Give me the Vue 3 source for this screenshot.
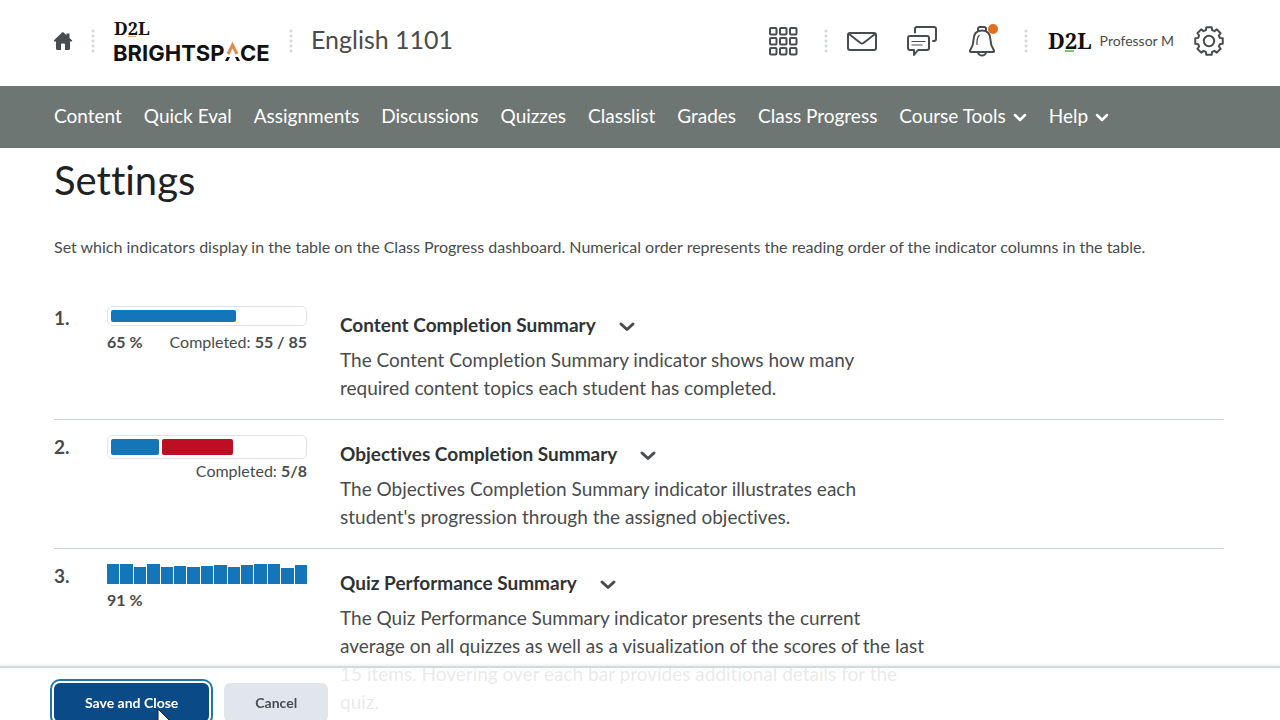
<template>
    <div class="page">
        <header class="header">
            <a class="home" href="#" aria-label="My Home">
                <svg width="20" height="20" viewBox="0 0 20 20">
                    <path d="M10 1 L13.5 4.200 V2.500 H16.500 V7 L19 9.300 Q19.600 10.500 18.500 10.500 H17 V17.500 Q17 19 15.500 19 H12 V13.500 Q12 12.500 11 12.500 H9 Q8 12.500 8 13.500 V19 H4.500 Q3 19 3 17.500 V10.500 H1.500 Q.4 10.500 1 9.300 L9 1.500 Q10 .6 11 1.500 Z" fill="#494c4e" />
                </svg>
            </a>
            <span class="dots"></span>
            <a class="logo" href="#" aria-label="D2L Brightspace">
                <svg width="158" height="50" viewBox="0 0 158 50">
                    <text class="logo-serif" x="1" y="19" font-size="18">D2L</text>
                    <rect x="15" y="20" width="8" height="1" fill="#e8a27c" />
                    <text class="logo-sans" x="0" y="45" font-size="22">BRIGHTSP</text>
                    <path d="M115 38 L119.500 29 L124 38" fill="none" stroke="#e58a4e" stroke-width="3" />
                    <path d="M112 45 L114 41 H117 L115 45 Z M124 45 L122 41 H125 L127 45 Z" fill="#111" />
                    <text class="logo-sans" x="127" y="45" font-size="22">CE</text>
                </svg>
            </a>
            <span class="dots"></span>
            <a class="course" href="#">English 1101</a>
            <div class="tools">
                <button class="icon-button" aria-label="Select a course">
                    <svg width="30" height="30" viewBox="0 0 30 30" fill="none" stroke="#494c4e" stroke-width="2">
                        <rect v-for="n in 9" :key="n" :x="2 + ((n - 1) % 3) * 10" :y="2 + Math.floor((n - 1) / 3) * 10" width="6.500" height="6.500" rx="1" />
                    </svg>
                </button>
                <span class="dots"></span>
                <button class="icon-button" aria-label="Message alerts">
                    <svg width="32" height="32" viewBox="0 0 32 32" fill="none" stroke="#494c4e" stroke-width="2" stroke-linejoin="round">
                        <rect x="2" y="8" width="28" height="17" rx="2" />
                        <path d="M3 9 L14.500 18 Q16 19 17.500 18 L29 9" />
                    </svg>
                </button>
                <button class="icon-button" aria-label="Subscription alerts">
                    <svg width="32" height="32" viewBox="0 0 32 32" fill="none" stroke="#494c4e" stroke-width="2" stroke-linecap="round" stroke-linejoin="round">
                        <path d="M9 7.500 V4 Q9 2 11 2 H28 Q30 2 30 4 V14 Q30 16 28 16 H27" />
                        <path d="M4 11 H21 Q23 11 23 13 V23 Q23 25 21 25 H12 L8 30 V25 H4 Q2 25 2 23 V13 Q2 11 4 11 Z" />
                        <path d="M6 16.500 H19 M6 20 H16" stroke-width="1.200" />
                    </svg>
                </button>
                <button class="icon-button" aria-label="Update alerts">
                    <svg width="32" height="32" viewBox="0 0 32 32" fill="none" stroke="#494c4e" stroke-width="2" stroke-linejoin="round">
                        <path d="M12 6 V4 Q12 2 14 2 H18 Q20 2 20 4 V6" />
                        <path d="M16 5.500 C9.500 5.500 7.500 10 7.500 15 C7.500 20.500 6 22.500 4 25.500 Q3.600 27 5 27 H27 Q28.400 27 28 25.500 C26 22.500 24.500 20.500 24.500 15 C24.500 10 22.500 5.500 16 5.500 Z" />
                        <path d="M12 28 Q13 30.500 16 30.500 Q19 30.500 20 28" />
                        <path d="M13.500 10 Q10.500 13 11 20" stroke-width="1.200" />
                    </svg>
                    <span class="alert-dot"></span>
                </button>
                <span class="dots"></span>
                <button class="profile">
                    <svg width="43" height="30" viewBox="0 0 43 30" aria-hidden="true">
                        <text class="logo-serif" x="0" y="23" font-size="22">D2L</text>
                        <rect x="17" y="24" width="9" height="2" fill="#65d468" />
                    </svg>
                    <span class="user">Professor M</span>
                </button>
                <button class="icon-button" aria-label="Admin tools">
                    <svg width="32" height="32" viewBox="0 0 32 32" fill="none" stroke="#494c4e" stroke-width="2" stroke-linejoin="round">
                        <path :d="gearPath" />
                        <circle cx="16" cy="16" r="5.200" />
                    </svg>
                </button>
            </div>
        </header>

        <nav class="navbar">
            <template v-for="item in navItems" :key="item.name">
                <button v-if="item.menu" class="nav-item">
                    {{ item.name }}
                    <svg width="14" height="10" viewBox="0 0 14 10"><path d="M2 4 L7 9 L12 4" /></svg>
                </button>
                <a v-else class="nav-item" href="#">{{ item.name }}</a>
            </template>
        </nav>

        <main class="content">
            <h1>Settings</h1>
            <p class="intro">Set which indicators display in the table on the Class Progress dashboard. Numerical order represents the reading order of the indicator columns in the table.</p>
            <ol class="indicators">
                <li v-for="(item, index) in indicators" :key="item.title" class="indicator">
                    <span class="order">{{ index + 1 }}.</span>
                    <div class="preview">
                        <div class="chart">
                            <div v-if="item.scores" class="scores">
                                <span v-for="(score, i) in item.scores" :key="i" :style="{ height: score + '%' }"></span>
                            </div>
                            <div v-else class="meter" :class="{ large: item.large }">
                                <span v-for="part in item.parts" :key="part.color" :class="part.color" :style="{ width: part.width + '%' }"></span>
                            </div>
                        </div>
                        <div class="legend">
                            <b v-if="item.percent">{{ item.percent }} %</b>
                            <span v-if="item.completed" class="completed">Completed: <b>{{ item.completed }}</b></span>
                        </div>
                    </div>
                    <div class="detail">
                        <h2>
                            {{ item.title }}
                            <button class="chevron" :aria-label="'Actions for ' + item.title">
                                <svg width="18" height="12" viewBox="0 0 18 12"><path d="M3 5 L9 10.500 L15 5" /></svg>
                            </button>
                        </h2>
                        <p>{{ item.text }}</p>
                    </div>
                </li>
            </ol>
        </main>

        <footer class="footer">
            <button class="button primary">Save and Close</button>
            <button class="button">Cancel</button>
            <svg class="pointer" width="20" height="28" viewBox="0 0 20 28">
                <path d="M1 1 V23 L6 18 L10 26 L13 24.500 L9.500 17 H17 Z" fill="#fff" stroke="#222" />
            </svg>
        </footer>
    </div>
</template>
<script setup>
const navItems = [
    { name: 'Content' },
    { name: 'Quick Eval' },
    { name: 'Assignments' },
    { name: 'Discussions' },
    { name: 'Quizzes' },
    { name: 'Classlist' },
    { name: 'Grades' },
    { name: 'Class Progress' },
    { name: 'Course Tools', menu: true },
    { name: 'Help', menu: true },
];

const indicators = [
    {
        title: 'Content Completion Summary',
        text: 'The Content Completion Summary indicator shows how many required content topics each student has completed.',
        parts: [{ color: 'blue', width: 65 }],
        percent: 65,
        completed: '55 / 85',
    },
    {
        title: 'Objectives Completion Summary',
        text: "The Objectives Completion Summary indicator illustrates each student's progression through the assigned objectives.",
        parts: [{ color: 'blue', width: 25 }, { color: 'red', width: 37 }],
        large: true,
        completed: '5/8',
    },
    {
        title: 'Quiz Performance Summary',
        text: 'The Quiz Performance Summary indicator presents the current average on all quizzes as well as a visualization of the scores of the last 15 items. Hovering over each bar provides additional details for the quiz.',
        scores: [100, 100, 86, 98, 86, 90, 84, 88, 95, 86, 94, 98, 98, 80, 95],
        percent: 91,
    },
];

// 8 teeth around the centre
function makeGear(){
    const points = [];
    for(let i = 0; i < 8; i++){
        [[-16, 11.3], [-11, 14], [11, 14], [16, 11.3]].forEach(([offset, r]) => {
            const angle = (i * 45 + offset - 90) * Math.PI / 180;
            points.push(`${16 + r * Math.cos(angle)} ${16 + r * Math.sin(angle)}`);
        });
    }
    return 'M' + points.join(' L') + ' Z';
}

const gearPath = makeGear();
</script>
<style>
body{
    margin: 0;
    background: #fff;
    overflow: hidden;
}
</style>
<style scoped>
.page{
    font-family: Lato, "Liberation Sans", sans-serif;
    font-variant-ligatures: none;
    color: #494c4e;
}
button{
    font-family: inherit;
    border: 0;
    padding: 0;
    background: none;
    color: inherit;
}
a{
    color: inherit;
    text-decoration: none;
}
svg{
    display: block;
    overflow: visible;
}
.header{
    display: flex;
    align-items: center;
    height: 82px;
    padding: 0 55px 4px 53px;
}
.home{
    width: 20px;
}
.dots{
    width: 4px;
    height: 24px;
    margin: 0 18px;
    background: radial-gradient(circle at 2px 2px, #d3d9e3 0 1px, transparent 2px) 0 0 / 4px 5px;
}
.logo-serif{
    font-family: "Noto Serif", "Liberation Serif", serif;
    font-weight: bold;
    fill: #111;
}
.logo-sans{
    font-family: Inter, "Liberation Sans", sans-serif;
    font-weight: 700;
    fill: #111;
}
.course{
    padding-bottom: 4px;
    font-size: 25px;
    line-height: 32px;
}
.tools{
    display: flex;
    align-items: center;
    margin-left: auto;
}
.tools .dots{
    margin: 0 4px 0 12px;
}
.icon-button{
    position: relative;
    margin: 0 14px;
}
.icon-button:last-child{
    margin-right: 0;
}
.alert-dot{
    position: absolute;
    top: -1px;
    right: 0;
    width: 10px;
    height: 10px;
    border-radius: 50%;
    background: #e07020;
}
.profile{
    display: flex;
    align-items: center;
    gap: 9px;
    margin: 0 5px 0 16px;
    font-size: 14px;
}
.user{
    padding-bottom: 2px;
}
.navbar{
    display: flex;
    align-items: center;
    gap: 22px;
    height: 62px;
    box-sizing: border-box;
    padding: 0 54px 2px;
    background: #6e7674;
    color: #fff;
}
.nav-item{
    display: flex;
    align-items: center;
    gap: 7px;
    font-size: 19px;
    line-height: 28px;
}
.nav-item path{
    fill: none;
    stroke: #fff;
    stroke-width: 2.500;
    stroke-linecap: round;
    stroke-linejoin: round;
}
.content{
    padding: 8px 56px 0 54px;
}
h1{
    margin: 0;
    font-size: 40px;
    line-height: 48px;
    font-weight: 400;
    color: #202122;
}
.intro{
    margin: 32px 0 33px;
    font-size: 16px;
    line-height: 22px;
}
.indicators{
    margin: 0;
    padding: 0;
    list-style: none;
}
.indicator{
    display: grid;
    grid-template-columns: 53px 200px 1fr;
    align-items: start;
    padding: 15px 0 17px;
    border-bottom: 1px solid #cdd5dc;
}
.order{
    font-size: 19px;
    line-height: 24px;
    font-weight: 700;
}
.chart{
    height: 26px;
}
.meter{
    display: flex;
    gap: 3px;
    box-sizing: border-box;
    height: 20px;
    padding: 3px;
    border: 1px solid #dfe3e8;
    border-radius: 5px;
}
.large{
    height: 24px;
}
.meter span{
    border-radius: 2px;
}
.blue{
    background: #1276b8;
}
.red{
    background: #bd0f24;
}
.scores{
    display: flex;
    align-items: flex-end;
    gap: 1px;
    height: 20px;
}
.scores span{
    flex: 1;
    background: #1276b8;
}
.legend{
    display: flex;
    font-size: 16px;
    line-height: 20px;
}
.completed{
    margin-left: auto;
}
.detail{
    max-width: 588px;
    padding-left: 33px;
}
h2{
    display: flex;
    align-items: center;
    gap: 22px;
    margin: 0;
    padding-bottom: 2px;
    font-size: 19px;
    line-height: 38px;
    color: #303335;
}
.chevron path{
    fill: none;
    stroke: #494c4e;
    stroke-width: 3;
    stroke-linecap: round;
    stroke-linejoin: round;
}
.detail p{
    margin: 0;
    font-size: 19px;
    line-height: 28px;
}
.footer{
    position: fixed;
    right: 0;
    bottom: 0;
    left: 0;
    display: flex;
    align-items: flex-start;
    gap: 15px;
    box-sizing: border-box;
    height: 54px;
    padding: 15px 54px 0;
    overflow: hidden;
    border-top: 2px solid #d3dadb;
    background: rgba(255, 255, 255, 0.88);
    box-shadow: 0 -1px 3px rgba(0, 0, 0, 0.08);
}
.button{
    height: 39px;
    padding: 0 31px;
    border-radius: 6px;
    background: #e1e6ec;
    font-size: 14px;
    font-weight: 700;
    flex-shrink: 0;
}
.primary{
    background: #0a4a87;
    color: #fff;
    box-shadow: 0 0 0 2px #fff, 0 0 0 4px #23769d;
}
.pointer{
    position: absolute;
    top: 40px;
    left: 157px;
}
</style>
